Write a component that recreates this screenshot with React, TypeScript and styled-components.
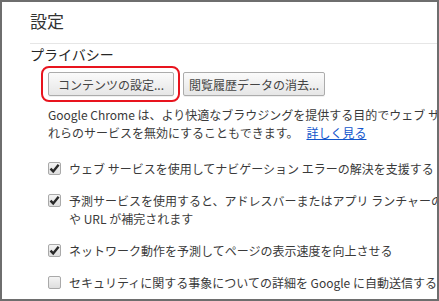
import styled, { createGlobalStyle } from "styled-components";

const GlobalStyle = createGlobalStyle`
  html, body {
    margin: 0;
    padding: 0;
    background: #ffffff;
  }
  body {
    font-family: "Noto Sans CJK JP", "Noto Sans", sans-serif;
    color: #3a3a3a;
  }
`;

const Frame = styled.div`
  width: 439px;
  height: 301px;
  box-sizing: border-box;
  border: 2px solid #6e6e6e;
  overflow: hidden;
  background: #fff;
`;

const Content = styled.div`
  padding: 7px 0 0 28px;
`;

const Title = styled.h1`
  margin: 0;
  font-size: 17px;
  font-weight: normal;
  line-height: 24px;
  color: #333;
`;

const Divider = styled.div`
  margin-top: 10px;
  border-top: 1px solid #e6e6e6;
`;

const SectionTitle = styled.h2`
  margin: 0;
  font-size: 14px;
  font-weight: normal;
  line-height: 20px;
  color: #262626;
`;

const Section = styled.div`
  padding-left: 11px;
`;

const ButtonRow = styled.div`
  display: flex;
  align-items: center;
  gap: 3px;
  margin-top: 2px;
`;

const Highlight = styled.div`
  display: flex;
  padding: 4px 4px 4px 5px;
  border: 2px solid #e8141e;
  border-radius: 8px;
`;

const Button = styled.button<{ $pad: number }>`
  height: 24px;
  padding: 0 ${(p) => p.$pad}px;
  font-family: inherit;
  font-size: 12px;
  color: #444;
  background: linear-gradient(#fbfbfb, #e6e6e6);
  border: 1px solid #acacac;
  border-radius: 2px;
  box-shadow: 0 1px 0 rgba(0, 0, 0, 0.06);
  white-space: nowrap;
`;

const Body = styled.div`
  padding-left: 7px;
`;

const Description = styled.p`
  margin: 4px 0 0;
  font-size: 12px;
  line-height: 18px;
  white-space: nowrap;
`;

const Link = styled.a`
  margin-left: 8px;
  color: #1155cc;
  text-decoration: underline;
`;

const CheckList = styled.div`
  display: flex;
  flex-direction: column;
  gap: 14px;
  margin-top: 18px;
`;

const CheckRow = styled.label`
  display: flex;
  align-items: flex-start;
  font-size: 12px;
  line-height: 18px;
  white-space: nowrap;
`;

const Box = styled.span`
  flex: none;
  width: 13px;
  height: 13px;
  margin: 2px 8px 0 0;
  box-sizing: border-box;
  border: 1px solid #a9a9a9;
  border-radius: 2px;
  background: linear-gradient(#f4f4f4, #dedede);
  display: flex;
  align-items: center;
  justify-content: center;
`;

const Check = ({ checked }: { checked: boolean }) => (
  <Box>
    {checked && (
      <svg width="11" height="11" viewBox="0 0 11 11">
        <path d="M1.5 5.6 L4.2 8.4 L9.6 1.8" fill="none" stroke="#2a2a2a" strokeWidth="2.4" />
      </svg>
    )}
  </Box>
);

const rows = [
  { checked: true, lines: ["ウェブ サービスを使用してナビゲーション エラーの解決を支援する"] },
  {
    checked: true,
    lines: [
      "予測サービスを使用すると、アドレスバーまたはアプリ ランチャーの検索ボックスで入力した検索語句",
      "や URL が補完されます",
    ],
  },
  { checked: true, lines: ["ネットワーク動作を予測してページの表示速度を向上させる"] },
  { checked: false, lines: ["セキュリティに関する事象についての詳細を Google に自動送信する"] },
];

export default function App() {
  return (
    <>
      <GlobalStyle />
      <Frame>
        <Content>
          <Title>設定</Title>
          <Divider />
          <SectionTitle>プライバシー</SectionTitle>
          <Section>
            <ButtonRow>
              <Highlight>
                <Button $pad={9}>コンテンツの設定...</Button>
              </Highlight>
              <Button $pad={5}>閲覧履歴データの消去...</Button>
            </ButtonRow>
            <Body>
              <Description>
                Google Chrome は、より快適なブラウジングを提供する目的でウェブ サービスを使用することがあります。必要に応じてこ
                <br />
                れらのサービスを無効にすることもできます。
                <Link href="#">詳しく見る</Link>
              </Description>
              <CheckList>
                {rows.map((r) => (
                  <CheckRow key={r.lines[0]}>
                    <Check checked={r.checked} />
                    <span>
                      {r.lines.map((l, i) => (
                        <span key={l}>
                          {i > 0 && <br />}
                          {l}
                        </span>
                      ))}
                    </span>
                  </CheckRow>
                ))}
              </CheckList>
            </Body>
          </Section>
        </Content>
      </Frame>
    </>
  );
}
